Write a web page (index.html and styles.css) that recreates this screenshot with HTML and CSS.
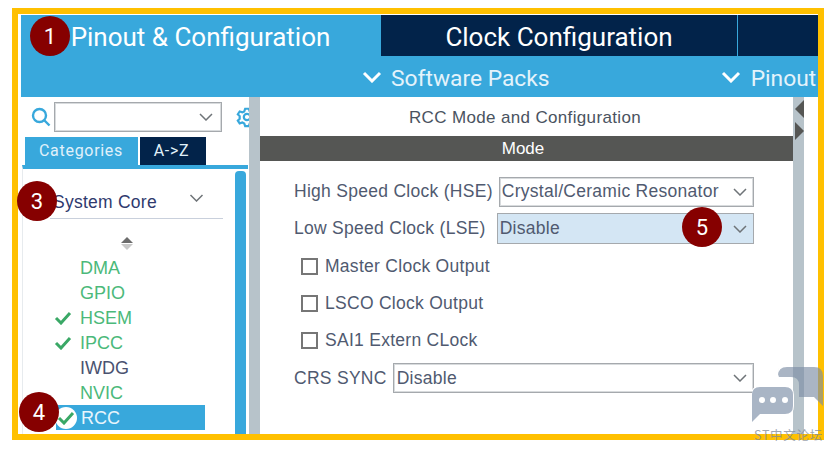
FILE: index.html
```html
<!DOCTYPE html>
<html lang="en">
<head>
<meta charset="utf-8">
<title>RCC Mode and Configuration</title>
<link rel="stylesheet" href="styles.css">
</head>
<body>
<div class="frame">
  <header class="header">
    <nav class="tabs">
      <div class="tab tab-active">Pinout &amp; Configuration</div>
      <div class="tab tab-clock">Clock Configuration</div>
      <div class="tab tab-rest"></div>
    </nav>
    <div class="subbar">
      <div class="submenu submenu-packs">
        <svg class="sub-chevron" viewBox="0 0 20 12"><path d="M2 2l8 8 8-8"/></svg>
        <span>Software Packs</span>
      </div>
      <div class="submenu submenu-pinout">
        <svg class="sub-chevron" viewBox="0 0 20 12"><path d="M2 2l8 8 8-8"/></svg>
        <span>Pinout</span>
      </div>
    </div>
  </header>
  <div class="body">
    <aside class="side">
      <div class="search">
        <svg class="search-icon" viewBox="0 0 20 20"><circle cx="8.5" cy="8.5" r="6.5"/><path d="M13 13l5.500 5.500"/></svg>
        <div class="combo">
          <svg class="chev" viewBox="0 0 14 8"><path d="M1 1l6 6 6-6"/></svg>
        </div>
        <svg class="gear" viewBox="0 0 24 24"><path d="M12 3l2 0 1 3 2 1 3-1 2 3-2 2v3l2 2-2 3-3-1-2 1-1 3h-4l-1-3-2-1-3 1-2-3 2-2v-3l-2-2 2-3 3 1 2-1 1-3z"/><circle cx="12" cy="12" r="3.500"/></svg>
      </div>
      <div class="side-tabs">
        <div class="side-tab side-tab-on">Categories</div>
        <div class="side-tab side-tab-off">A-&gt;Z</div>
      </div>
      <div class="tree">
        <div class="tree-main">
          <div class="group">
            <span>System Core</span>
            <svg class="chev chev-group" viewBox="0 0 14 8"><path d="M1 1l6 6 6-6"/></svg>
          </div>
          <div class="sort">
            <i class="sort-up"></i>
            <i class="sort-down"></i>
          </div>
          <ul class="list">
            <li class="item ok"><span>DMA</span></li>
            <li class="item ok"><span>GPIO</span></li>
            <li class="item ok"><svg class="check" viewBox="0 0 18 14"><path d="M2 7l5 5 9-10"/></svg><span>HSEM</span></li>
            <li class="item ok"><svg class="check" viewBox="0 0 18 14"><path d="M2 7l5 5 9-10"/></svg><span>IPCC</span></li>
            <li class="item plain"><span>IWDG</span></li>
            <li class="item ok"><span>NVIC</span></li>
            <li class="item selected">
              <span class="check-disc"><svg class="check" viewBox="0 0 18 14"><path d="M2 7l5 5 9-10"/></svg></span>
              <span>RCC</span>
            </li>
          </ul>
        </div>
        <div class="scrollbar"></div>
      </div>
    </aside>
    <div class="splitter"></div>
    <main class="main">
      <div class="title">RCC Mode and Configuration</div>
      <div class="mode-bar">Mode</div>
      <form class="form">
        <div class="row">
          <span class="label">High Speed Clock (HSE)</span>
          <div class="select select-hse"><span>Crystal/Ceramic Resonator</span><svg class="chev" viewBox="0 0 14 8"><path d="M1 1l6 6 6-6"/></svg></div>
        </div>
        <div class="row">
          <span class="label label-lse">Low Speed Clock (LSE)</span>
          <div class="select select-lse"><span>Disable</span><svg class="chev" viewBox="0 0 14 8"><path d="M1 1l6 6 6-6"/></svg></div>
        </div>
        <div class="row row-check"><i class="box"></i><span class="label">Master Clock Output</span></div>
        <div class="row row-check"><i class="box"></i><span class="label">LSCO Clock Output</span></div>
        <div class="row row-check"><i class="box"></i><span class="label">SAI1 Extern CLock</span></div>
        <div class="row">
          <span class="label">CRS SYNC</span>
          <div class="select select-crs"><span>Disable</span><svg class="chev" viewBox="0 0 14 8"><path d="M1 1l6 6 6-6"/></svg></div>
        </div>
      </form>
    </main>
    <div class="rail">
      <i class="rail-left"></i>
      <i class="rail-right"></i>
    </div>
  </div>
</div>
<span class="badge badge-1">1</span>
<span class="badge badge-3">3</span>
<span class="badge badge-4">4</span>
<span class="badge badge-5">5</span>
<svg class="bubbles" viewBox="0 0 72 56">
  <path class="bubble-back" d="M26 9q0-9 9-9h27q9 0 9 9v30l-9-9h-15v-12q0-8-8-8h-12q-1-1-1-10z"/>
  <path class="bubble-front" d="M8 20h25q8 0 8 8v11q0 8-8 8h-25l-8 8v-27q0-8 8-8z"/>
  <circle class="dot" cx="10" cy="33" r="3"/>
  <circle class="dot" cx="21" cy="33" r="3"/>
  <circle class="dot" cx="33" cy="33" r="3"/>
</svg>
<span class="watermark">ST中文论坛</span>
</body>
</html>
```
FILE: styles.css
```css
* { box-sizing: border-box; }
html, body { margin: 0; padding: 0; background: #fff; }
body {
  width: 831px;
  height: 450px;
  overflow: hidden;
  position: relative;
  padding: 8px 0 0 12px;
  font-family: Roboto, "Liberation Sans", sans-serif;
}
.frame {
  width: 812px;
  height: 432px;
  border: 6px solid #ffc000;
  padding: 1px 0 0 3px;
  background: #fff;
  display: flex;
  flex-direction: column;
  overflow: hidden;
}
.header { flex: none; background: #38a8dc; height: 82px; }
.tabs { display: flex; height: 41px; color: #fff; font-size: 26px; }
.tab { display: flex; align-items: center; justify-content: center; padding-top: 2px; }
.tab-active { width: 359px; margin-right: 1px; }
.tab-clock { width: 356px; background: #02234a; margin-right: 1px; }
.tab-rest { flex: 1; background: #02234a; }
.subbar {
  height: 41px;
  display: flex;
  align-items: center;
  color: #e4f3fb;
  font-size: 22.800px;
  overflow: hidden;
  white-space: nowrap;
  padding-top: 4px;
}
.submenu { display: flex; align-items: center; gap: 9px; }
.submenu-packs { margin-left: 341px; }
.submenu-pinout { margin-left: 171px; gap: 10px; }
.sub-chevron { width: 20px; height: 12px; fill: none; stroke: #fff; stroke-width: 3; position: relative; top: -2px; }
.body { flex: 1; display: flex; min-height: 0; }
.side { width: 228px; display: flex; flex-direction: column; flex: none; overflow: hidden; }
.search { display: flex; align-items: center; height: 36px; padding: 3px 0 0 10px; flex: none; }
.search-icon { width: 20px; height: 20px; fill: none; stroke: #38a8dc; stroke-width: 2.400; flex: none; margin-right: 3px; }
.combo {
  width: 168px;
  height: 30px;
  border: 1px solid #a5a9ad;
  box-shadow: inset 0 0 0 1px #d8dbdd;
  display: flex;
  align-items: center;
  justify-content: flex-end;
  padding-right: 8px;
  flex: none;
}
.chev { width: 14px; height: 8px; fill: none; stroke: #6f7478; stroke-width: 1.500; flex: none; }
.gear { width: 22px; height: 22px; flex: none; margin-left: 14px; fill: none; stroke: #38a8dc; stroke-width: 2.400; }
.side-tabs { display: flex; height: 28px; margin: 4px 0 0 4px; flex: none; font-size: 16px; letter-spacing: .7px; color: #e0f1fa; }
.side-tab { display: flex; align-items: center; justify-content: center; padding-bottom: 2px; }
.side-tab-on { width: 113px; background: #38a8dc; margin-right: 2px; padding-right: 1px; }
.side-tab-off { width: 66px; background: #02234a; padding-right: 3px; }
.tree {
  flex: 1;
  min-height: 0;
  display: flex;
  border-top: 4px solid #38a8dc;
  border-left: 1px solid #e7ebee;
  margin-left: 1px;
  padding-top: 2px;
  margin-right: 1px;
}
.tree-main { flex: 1; min-width: 0; }
.scrollbar { width: 11px; flex: none; background: #38a8dc; border-radius: 4px 4px 0 0; margin-right: 2px; margin-left: -1px; }
.group {
  height: 48px;
  margin-left: 27px;
  margin-right: 13px;
  padding-top: 16px;
  border-bottom: 1px solid #c9d0dc;
  display: flex;
  align-items: center;
  justify-content: space-between;
  font-family: "Liberation Sans", sans-serif;
  font-size: 17.500px;
  letter-spacing: .25px;
  color: #2f3a6e;
  padding-right: 19px;
  padding-left: 3px;
}
.chev-group { width: 15px; position: relative; top: -5px; }
.sort { height: 36px; padding-top: 12px; display: flex; flex-direction: column; align-items: center; justify-content: center; gap: 1px; width: 208px; }
.sort-up, .sort-down { width: 0; height: 0; border-left: 6px solid transparent; border-right: 6px solid transparent; }
.sort-up { border-bottom: 6px solid #6c6c6c; }
.sort-down { border-top: 6px solid #c8c8c8; }
.list { list-style: none; margin: 0; padding: 0; font-family: "Liberation Sans", sans-serif; }
.item { height: 25px; display: flex; align-items: center; padding: 2px 0 0 57px; font-size: 18px; position: relative; }
.ok { color: #4bb97a; }
.plain { color: #4a5270; }
.check { width: 18px; height: 14px; fill: none; stroke: #3aa866; stroke-width: 3; position: absolute; left: 31px; top: 6px; }
.selected { margin-left: 33px; width: 149px; background: #38a8dc; color: #e8f5fc; padding-left: 25px; }
.check-disc { position: absolute; left: -1px; top: 2px; width: 22px; height: 22px; border-radius: 50%; background: #fff; }
.check-disc .check { left: 2px; top: 4px; }
.splitter { width: 11px; flex: none; background: #b7c3ca; }
.main { width: 533px; flex: none; display: flex; flex-direction: column; font-family: "Liberation Sans", sans-serif; }
.title { height: 39px; padding: 3px 3px 0 0; display: flex; align-items: center; justify-content: center; font-size: 17px; letter-spacing: .35px; color: #4a5360; }
.mode-bar { height: 25px; background: #555654; color: #fff; font-size: 17px; display: flex; align-items: center; justify-content: center; flex: none; padding: 1px 7px 0 0; }
.form { padding: 12px 39px 0 34px; display: flex; flex-direction: column; }
.row { height: 37.300px; display: flex; align-items: center; color: #505a70; font-size: 17.500px; letter-spacing: .28px; }
.label { white-space: nowrap; }
.row-check { padding-left: 7px; gap: 7px; }
.box { width: 17px; height: 17px; border: 2px solid #767676; flex: none; }
.select {
  flex: 1;
  height: 30px;
  border: 1px solid #a5a9ad;
  box-shadow: inset 0 0 0 1px #d8dbdd;
  margin-left: 6px;
  padding: 0 6px 0 2px;
  display: flex;
  align-items: center;
  justify-content: space-between;
  white-space: nowrap;
}
.select-lse { background: #d4e6f4; margin-left: 11px; height: 31px; box-shadow: none; }
.select-crs { padding-left: 3px; }
.rail { width: 11px; flex: none; background: #b7c3ca; padding: 3px 0 0 2px; display: flex; flex-direction: column; gap: 4px; }
.rail-left, .rail-right { width: 0; height: 0; border-top: 9px solid transparent; border-bottom: 9px solid transparent; }
.rail-left { border-right: 9px solid #555654; }
.rail-right { border-left: 9px solid #555654; }
.badge {
  position: absolute;
  width: 40px;
  height: 40px;
  border-radius: 50%;
  background: #860000;
  color: #fff;
  font-size: 22px;
  display: flex;
  align-items: center;
  justify-content: center;
}
.badge-1 { left: 30px; top: 16px; }
.badge-3 { left: 17px; top: 181px; }
.badge-4 { left: 19px; top: 392px; }
.badge-5 { left: 682px; top: 207px; }
.bubbles { position: absolute; left: 752px; top: 367px; width: 72px; height: 56px; }
.bubble-back { fill: #7d8ea5; fill-opacity: .65; }
.bubble-front { fill: #a9b5c5; stroke: #fff; stroke-width: 2; paint-order: stroke; }
.dot { fill: #fff; }
.watermark { position: absolute; left: 754px; top: 428px; font-family: "Noto Sans CJK SC", sans-serif; font-size: 12.500px; line-height: 14px; letter-spacing: .7px; color: #7f8a99; opacity: .75; white-space: nowrap; }
```
